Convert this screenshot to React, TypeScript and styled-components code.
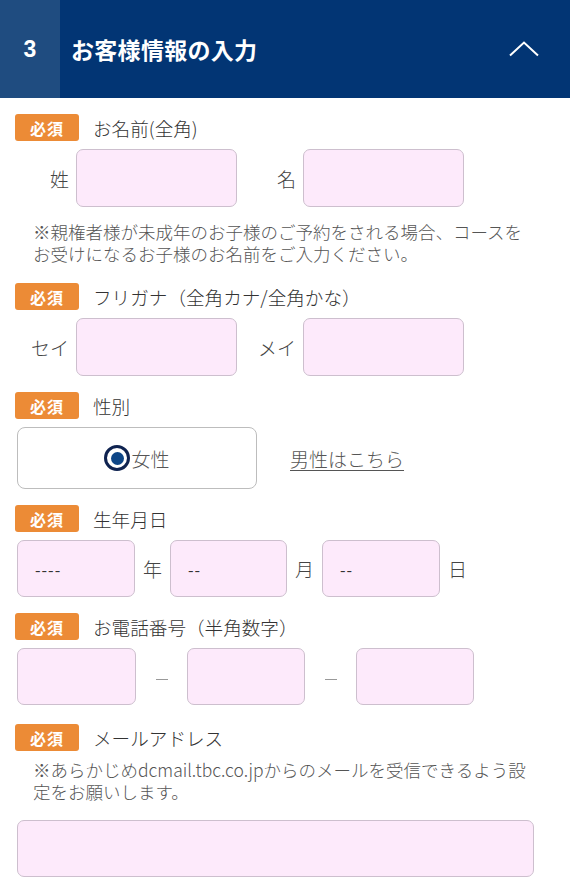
import React from 'react';
import styled, { createGlobalStyle } from 'styled-components';

const GlobalStyle = createGlobalStyle`
    body {
        margin: 0;
        background: #fff;
        font-family: "Noto Sans CJK JP", "Noto Sans", sans-serif;
        font-weight: 300;
        color: #333;
    }
    * { box-sizing: border-box; }
`;

const Header = styled.header`
    display: flex;
    align-items: stretch;
    height: 98px;
    background: #023574;
    color: #fff;
`;

const StepNum = styled.div`
    width: 60px;
    display: flex;
    align-items: center;
    justify-content: center;
    background: #1f4c80;
    font-family: "Liberation Sans", "Noto Sans", sans-serif;
    font-weight: 700;
    font-size: 23px;
`;

const Title = styled.h2`
    flex: 1;
    margin: 0;
    padding-left: 11px;
    display: flex;
    align-items: center;
    font-size: 23px;
    font-weight: 700;
    letter-spacing: 0.3px;
`;

const Toggle = styled.div`
    width: 66px;
    display: flex;
    align-items: center;
    justify-content: flex-start;
    padding-left: 5px;
`;

const Form = styled.div`
    padding: 16px 16px 0 17px;
`;

const Field = styled.section<{ $gap?: number }>`
    margin-bottom: ${({ $gap }) => $gap ?? 16}px;
`;

const LabelRow = styled.div`
    display: flex;
    align-items: center;
    height: 27px;
    margin-left: -2px;
    margin-bottom: 8px;
`;

const Badge = styled.span`
    display: inline-flex;
    align-items: center;
    justify-content: center;
    width: 64px;
    height: 27px;
    border-radius: 3px;
    background: #ec8b36;
    color: #fff;
    font-size: 16px;
    font-weight: 700;
    letter-spacing: 1px;
`;

const Label = styled.span`
    margin-left: 14px;
    font-size: 18.6px;
    color: #333;
`;

const Row = styled.div<{ $top?: number }>`
    display: flex;
    align-items: center;
    margin-top: ${({ $top }) => $top ?? 0}px;
`;

const SideLabel = styled.span<{ $w: number }>`
    width: ${({ $w }) => $w}px;
    padding-right: 7px;
    text-align: right;
    font-size: 19px;
    color: #444;
`;

const Unit = styled.span`
    width: 35px;
    text-align: center;
    font-size: 19px;
    color: #444;
`;

const Dash = styled.span`
    width: 51px;
    display: flex;
    justify-content: center;
    &::before {
        content: '';
        width: 12px;
        height: 1px;
        background: #999;
        margin-top: 6px;
    }
`;

const TextBox = styled.input<{ $w: number; $h?: number }>`
    width: ${({ $w }) => $w}px;
    height: ${({ $h }) => $h ?? 57}px;
    padding: 0 17px;
    border: 1px solid #cdbfce;
    border-radius: 7px;
    background: #fdeafb;
    font-family: inherit;
    font-size: 16px;
    color: #333;
    outline: none;
    &::placeholder {
        color: #333;
        font-weight: 400;
        letter-spacing: 1px;
    }
`;

const Note = styled.p<{ $top: number }>`
    max-width: 498px;
    margin: ${({ $top }) => $top}px 0 0 16px;
    font-size: 17.5px;
    line-height: 21.5px;
    color: #555;
`;

const GenderBox = styled.label`
    width: 240px;
    height: 62px;
    display: flex;
    align-items: center;
    justify-content: center;
    border: 1px solid #bdbdbd;
    border-radius: 8px;
    font-size: 19px;
    color: #555;
`;

const Radio = styled.span`
    width: 26px;
    height: 26px;
    border-radius: 50%;
    border: 3.5px solid #0f2350;
    display: flex;
    align-items: center;
    justify-content: center;
    margin-right: 1px;
    &::after {
        content: '';
        width: 13px;
        height: 13px;
        border-radius: 50%;
        background: #0d4687;
    }
`;

const SwitchLink = styled.a`
    margin-left: 33px;
    font-size: 19px;
    color: #555;
    text-decoration: underline;
    text-underline-offset: 3px;
`;

const App: React.FC = () => (
    <>
        <GlobalStyle />
        <Header>
            <StepNum>3</StepNum>
            <Title>お客様情報の入力</Title>
            <Toggle>
                <svg width="30" height="16" viewBox="0 0 30 16">
                    <polyline points="1,14.5 15,1.5 29,14.5" fill="none" stroke="#fff" strokeWidth="2" />
                </svg>
            </Toggle>
        </Header>
        <Form>
            <Field $gap={19}>
                <LabelRow><Badge>必須</Badge><Label>お名前(全角)</Label></LabelRow>
                <Row>
                    <SideLabel $w={59}>姓</SideLabel>
                    <TextBox $w={161} $h={58} />
                    <SideLabel $w={66}>名</SideLabel>
                    <TextBox $w={161} $h={58} />
                </Row>
                <Note $top={14}>※親権者様が未成年のお子様のご予約をされる場合、コースをお受けになるお子様のお名前をご入力ください。</Note>
            </Field>
            <Field>
                <LabelRow><Badge>必須</Badge><Label>フリガナ（全角カナ/全角かな）</Label></LabelRow>
                <Row>
                    <SideLabel $w={59}>セイ</SideLabel>
                    <TextBox $w={161} $h={58} />
                    <SideLabel $w={66}>メイ</SideLabel>
                    <TextBox $w={161} $h={58} />
                </Row>
            </Field>
            <Field>
                <LabelRow><Badge>必須</Badge><Label>性別</Label></LabelRow>
                <Row>
                    <GenderBox><Radio />女性</GenderBox>
                    <SwitchLink>男性はこちら</SwitchLink>
                </Row>
            </Field>
            <Field>
                <LabelRow><Badge>必須</Badge><Label>生年月日</Label></LabelRow>
                <Row>
                    <TextBox $w={118} placeholder="----" />
                    <Unit>年</Unit>
                    <TextBox $w={117} placeholder="--" />
                    <Unit>月</Unit>
                    <TextBox $w={118} placeholder="--" />
                    <Unit>日</Unit>
                </Row>
            </Field>
            <Field $gap={19}>
                <LabelRow><Badge>必須</Badge><Label>お電話番号（半角数字）</Label></LabelRow>
                <Row>
                    <TextBox $w={119} />
                    <Dash />
                    <TextBox $w={118} />
                    <Dash />
                    <TextBox $w={118} />
                </Row>
            </Field>
            <Field>
                <LabelRow><Badge>必須</Badge><Label>メールアドレス</Label></LabelRow>
                <Note $top={0}>※あらかじめdcmail.tbc.co.jpからのメールを受信できるよう設定をお願いします。</Note>
                <Row $top={18}>
                    <TextBox $w={517} />
                </Row>
            </Field>
        </Form>
    </>
);

export default App;
